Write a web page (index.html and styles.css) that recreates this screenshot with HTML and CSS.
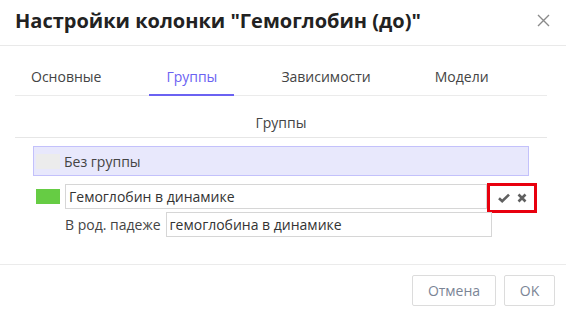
FILE: index.html
```html
<!DOCTYPE html>
<html lang="ru">
<head>
    <meta charset="UTF-8">
    <title>Настройки колонки</title>
    <link rel="stylesheet" href="styles.css">
</head>
<body>
    <div class="dialog">
        <div class="dialog-header">
            <h1>Настройки колонки "Гемоглобин (до)"</h1>
            <span class="close">
                <svg width="13" height="13" viewBox="0 0 13 13"><path d="M1 1L12 12M12 1L1 12" stroke="#8a8a8a" stroke-width="1.4" fill="none"/></svg>
            </span>
        </div>

        <div class="dialog-body">
            <div class="tabs">
                <div class="tab">Основные</div>
                <div class="tab active">Группы</div>
                <div class="tab">Зависимости</div>
                <div class="tab">Модели</div>
            </div>

            <div class="section-title">Группы</div>

            <div class="groups">
                <div class="group selected">
                    <span class="swatch grey"></span>
                    <span>Без группы</span>
                </div>

                <div class="edit-row">
                    <span class="swatch green"></span>
                    <input type="text" class="field name" value="Гемоглобин в динамике">
                    <span class="actions">
                        <svg width="12" height="10" viewBox="0 0 12 10"><path d="M1 5.2L4.2 8.2L11 1.6" stroke="#606060" stroke-width="2.6" fill="none"/></svg>
                        <svg width="10" height="10" viewBox="0 0 10 10"><path d="M1.5 1.5L8.5 8.5M8.5 1.5L1.5 8.5" stroke="#606060" stroke-width="2.6" fill="none"/></svg>
                    </span>
                </div>
                <div class="case-row">
                    <label>В род. падеже</label>
                    <input type="text" class="field" value="гемоглобина в динамике">
                </div>
            </div>
        </div>

        <div class="dialog-footer">
            <button class="btn cancel">Отмена</button>
            <button class="btn ok">OK</button>
        </div>
    </div>
</body>
</html>
```

FILE: styles.css
```css
body {
    margin: 0;
    background: #fff;
    font-family: "Open Sans", Arial, sans-serif;
    font-size: 14px;
    color: #333;
}

.dialog {
    width: 566px;
    height: 314px;
    display: flex;
    flex-direction: column;
}

.dialog-header {
    height: 45px;
    border-bottom: 1px solid #e9e9e9;
    display: flex;
    align-items: center;
    justify-content: space-between;
    padding: 0 16px 0 15px;
}
.dialog-header h1 {
    margin: 0;
    font-size: 20px;
    font-weight: 700;
    color: #222;
    position: relative;
    top: -2px;
}
.close {
    display: flex;
    position: relative;
    top: -2px;
}

.dialog-body {
    flex: 1;
    padding: 12px 19px 0 15px;
}

.tabs {
    display: flex;
    gap: 30px;
    border-bottom: 1px solid #ebebeb;
}
.tab {
    padding: 9px 17px 7px;
    line-height: 20px;
    color: #444;
    border-bottom: 2px solid transparent;
    margin-bottom: -1px;
}
.tab:first-child {
    margin-left: -1px;
    margin-right: 1px;
}
.tab.active {
    color: #6b62f2;
    border-bottom-color: #6b62f2;
}

.section-title {
    text-align: center;
    line-height: 20px;
    padding: 17px 0 4px;
    border-bottom: 1px solid #e6e6e6;
    color: #444;
}

.groups {
    padding: 8px 18px 0;
}

.group {
    display: flex;
    align-items: center;
    gap: 4px;
    height: 28px;
    padding: 0 2px;
    color: #444;
}
.group.selected {
    background: #e8e8fc;
    border: 1px solid #c3c1fb;
}

.swatch {
    width: 24px;
    height: 15px;
    flex: none;
}
.swatch.grey { background: #ececec; }
.swatch.green { background: #66cc44; }

.edit-row {
    display: flex;
    align-items: flex-start;
    margin-top: 8px;
    padding-left: 3px;
}
.edit-row .swatch {
    margin-top: 5px;
    margin-right: 5px;
}

.field {
    font-family: "Open Sans", Arial, sans-serif;
    font-size: 14px;
    color: #333;
    height: 25px;
    box-sizing: border-box;
    border: 1px solid #d6d6d6;
    padding: 0 3px;
    margin: 0;
    outline: none;
    flex: none;
}
.field.name {
    width: 422px;
}

.actions {
    flex: none;
    width: 50px;
    height: 30px;
    box-sizing: border-box;
    border: 3px solid #e8000e;
    margin: -1px 0 -4px;
    display: flex;
    align-items: center;
    justify-content: center;
    gap: 7px;
}

.case-row {
    display: flex;
    align-items: center;
    gap: 5px;
    margin-top: 3px;
    padding-left: 32px;
}
.case-row label {
    color: #444;
}
.case-row .field {
    width: 326px;
}

.dialog-footer {
    height: 50px;
    border-top: 1px solid #ebebeb;
    display: flex;
    justify-content: flex-end;
    align-items: flex-start;
    gap: 8px;
    padding: 10px 11px 0 0;
    box-sizing: border-box;
}
.btn {
    height: 31px;
    background: #fff;
    border: 1px solid #dcdcdc;
    border-radius: 2px;
    font-family: "Open Sans", Arial, sans-serif;
    font-size: 14px;
    color: #7b8596;
    padding: 0;
    cursor: pointer;
}
.btn.cancel { width: 84px; }
.btn.ok { width: 51px; }
```
